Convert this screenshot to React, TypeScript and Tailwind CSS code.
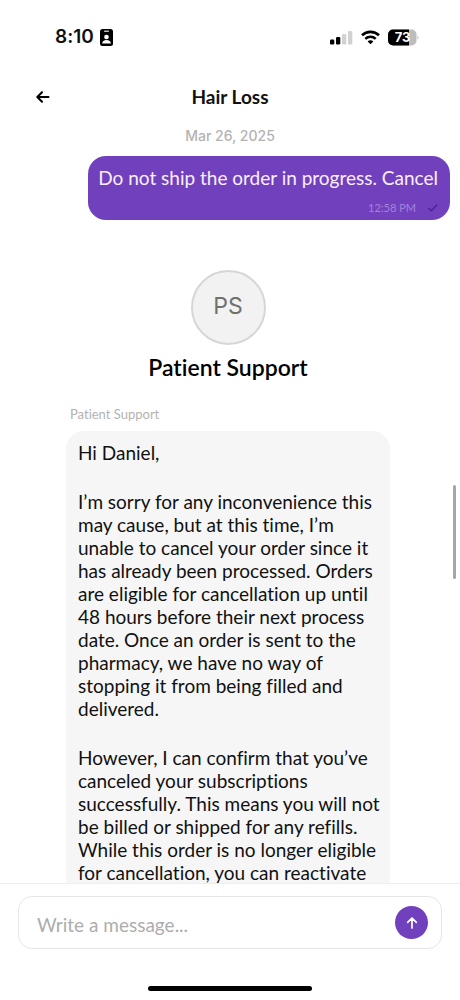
import { useState } from "react";

const supportParagraphs = [
  "Hi Daniel,",
  "I’m sorry for any inconvenience this may cause, but at this time, I’m unable to cancel your order since it has already been processed. Orders are eligible for cancellation up until 48 hours before their next process date. Once an order is sent to the pharmacy, we have no way of stopping it from being filled and delivered.",
  "However, I can confirm that you’ve canceled your subscriptions successfully. This means you will not be billed or shipped for any refills. While this order is no longer eligible for cancellation, you can reactivate",
];

function StatusBar() {
  return (
    <div className="flex h-[72px] shrink-0 items-center justify-between pr-[41px] pl-[55px] pt-[2px]">
      <div className="flex items-center gap-[6px]">
        <span className="font-['Inter',sans-serif] text-[19px] leading-6 font-semibold">8:10</span>
        <svg width="13" height="17" viewBox="0 0 13 17" aria-hidden="true">
          <rect width="13" height="17" rx="2.5" fill="#000" />
          <rect x="4" y="1.6" width="5" height="1.3" rx="0.6" fill="#bbb" />
          <circle cx="6.5" cy="8" r="2.3" fill="#fff" />
          <path d="M2.2 14.6c0-2.4 1.7-3.7 4.3-3.7s4.3 1.3 4.3 3.7z" fill="#fff" />
        </svg>
      </div>
      <div className="flex items-center gap-[8px]">
        <svg width="23" height="15" viewBox="0 0 23 15" aria-hidden="true">
          <rect x="0" y="9.5" width="4.3" height="5" rx="1.2" fill="#000" />
          <rect x="6" y="7" width="4.3" height="7.5" rx="1.2" fill="#000" />
          <rect x="12" y="4" width="4.3" height="10.5" rx="1.2" fill="#d2d2d2" />
          <rect x="18" y="1" width="4.3" height="13.5" rx="1.2" fill="#d2d2d2" />
        </svg>
        <svg width="19" height="15" viewBox="0 0 19 15" aria-hidden="true">
          <g fill="none" stroke="#000" strokeWidth="2.6">
            <path d="M1 5.3C5.7.7 13.3.7 18 5.3" />
            <path d="M4.3 8.9c2.9-2.8 7.5-2.8 10.4 0" />
          </g>
          <path d="M6.6 11.4c1.6-1.5 4.2-1.5 5.8 0l-2.9 2.9z" fill="#000" />
        </svg>
        <svg width="31" height="17" viewBox="0 0 31 17" role="img" aria-label="Battery 73 percent">
          <rect width="28.5" height="16" y="0.5" rx="5" fill="#bdbdbd" />
          <path d="M5 .5h16v16H5a5 5 0 0 1-5-5v-6a5 5 0 0 1 5-5z" fill="#000" />
          <path d="M29.5 6.5c1.5.6 1.5 3.4 0 4z" fill="#bdbdbd" />
          <text x="14.5" y="13.3" textAnchor="middle" fontFamily="Inter, sans-serif" fontSize="13" fontWeight="700" fill="#fff">
            73
          </text>
        </svg>
      </div>
    </div>
  );
}

function Header() {
  return (
    <header className="grid h-[49px] shrink-0 grid-cols-[48px_1fr_48px] items-center px-[19px]">
      <button type="button" aria-label="Back" className="flex h-10 w-12 items-center justify-center">
        <svg width="14" height="12" viewBox="0 0 14 12" fill="none" stroke="#000" strokeWidth="2" strokeLinecap="round" strokeLinejoin="round" aria-hidden="true">
          <path d="M12.5 6H1.5M6 1.2 1.3 6 6 10.8" />
        </svg>
      </button>
      <h1 className="text-center text-[19px] leading-6 font-bold">Hair Loss</h1>
    </header>
  );
}

function SentMessage() {
  return (
    <div className="mr-[10px] ml-auto w-fit rounded-[18px] bg-[#7140bd] pt-[9px] pr-3 pb-[5px] pl-[10px]">
      <p className="text-[19px] leading-[26px] text-[#fbeefe]">Do not ship the order in progress. Cancel</p>
      <div className="mt-[10px] flex h-[14px] items-center justify-end gap-[12px] text-[11px] leading-[14px] text-[#a583da]">
        <span>12:58 PM</span>
        <svg width="10" height="8" viewBox="0 0 10 8" fill="none" stroke="#4b2496" strokeWidth="1.5" strokeLinecap="round" strokeLinejoin="round" aria-label="Sent" role="img">
          <path d="m1 4.5 2.400 2.300L8.800 1" />
        </svg>
      </div>
    </div>
  );
}

function Composer() {
  const [draft, setDraft] = useState("");
  return (
    <footer className="shrink-0 border-t border-[#eeeeee] bg-white px-[18px] pt-[12px] pb-[9px]">
      <form
        onSubmit={(event) => event.preventDefault()}
        className="flex h-[53px] items-center rounded-[14px] border border-[#e6e6e6] pr-[13px] pl-[18px]"
      >
        <input
          type="text"
          aria-label="Write a message"
          placeholder="Write a message..."
          value={draft}
          onChange={(event) => setDraft(event.target.value)}
          className="min-w-0 flex-1 pt-1 text-[19px] leading-6 outline-none placeholder:text-[#adadad]"
        />
        <button type="submit" aria-label="Send" className="flex size-[33px] items-center justify-center rounded-full bg-[#7140bd]">
          <svg width="12" height="12" viewBox="0 0 12 12" fill="none" stroke="#fff" strokeWidth="1.7" strokeLinecap="round" strokeLinejoin="round" aria-hidden="true">
            <path d="M6 11V1.2M1.7 5.3 6 1l4.3 4.3" />
          </svg>
        </button>
      </form>
      <div className="mx-auto mt-[37px] h-[5px] w-[164px] rounded-full bg-black" />
    </footer>
  );
}

export default function App() {
  return (
    <div className="flex h-screen flex-col bg-white font-['Lato','Liberation_Sans',sans-serif] text-[#111111] [font-variant-ligatures:none]">
      <StatusBar />
      <Header />
      <div className="relative min-h-0 flex-1">
        <main className="h-full overflow-y-auto [scrollbar-width:none]">
          <p className="mt-[5px] mb-[10px] text-center font-['Inter',sans-serif] text-[14px] leading-5 font-medium text-[#b3b3b3]">
            Mar 26, 2025
          </p>
          <SentMessage />
          <section className="mt-[50px] flex flex-col items-center pr-[4px]">
            <div className="flex size-[75px] items-center justify-center rounded-full border-2 border-[#d6d6d6] bg-[#f2f2f2] pb-1 font-['Inter',sans-serif] text-[23px] leading-7 text-[#707070]">
              PS
            </div>
            <h2 className="mt-[8px] text-[23px] leading-7 font-semibold text-black">Patient Support</h2>
          </section>
          <section className="mt-[25px] mr-[70px] ml-[66px]">
            <h3 className="pl-[4px] text-[13px] leading-4 text-[#b3b3b3]">Patient Support</h3>
            <div className="mt-[9px] flex flex-col gap-[26px] rounded-[18px] bg-[#f6f6f6] pt-[10px] pr-2 pb-4 pl-3 text-[19px] leading-[23px]">
              {supportParagraphs.map((paragraph) => (
                <p key={paragraph}>{paragraph}</p>
              ))}
            </div>
          </section>
        </main>
        <div className="absolute top-[364px] right-[4px] h-[94px] w-[3px] rounded-full bg-[#a6a6a6]" />
      </div>
      <Composer />
    </div>
  );
}
